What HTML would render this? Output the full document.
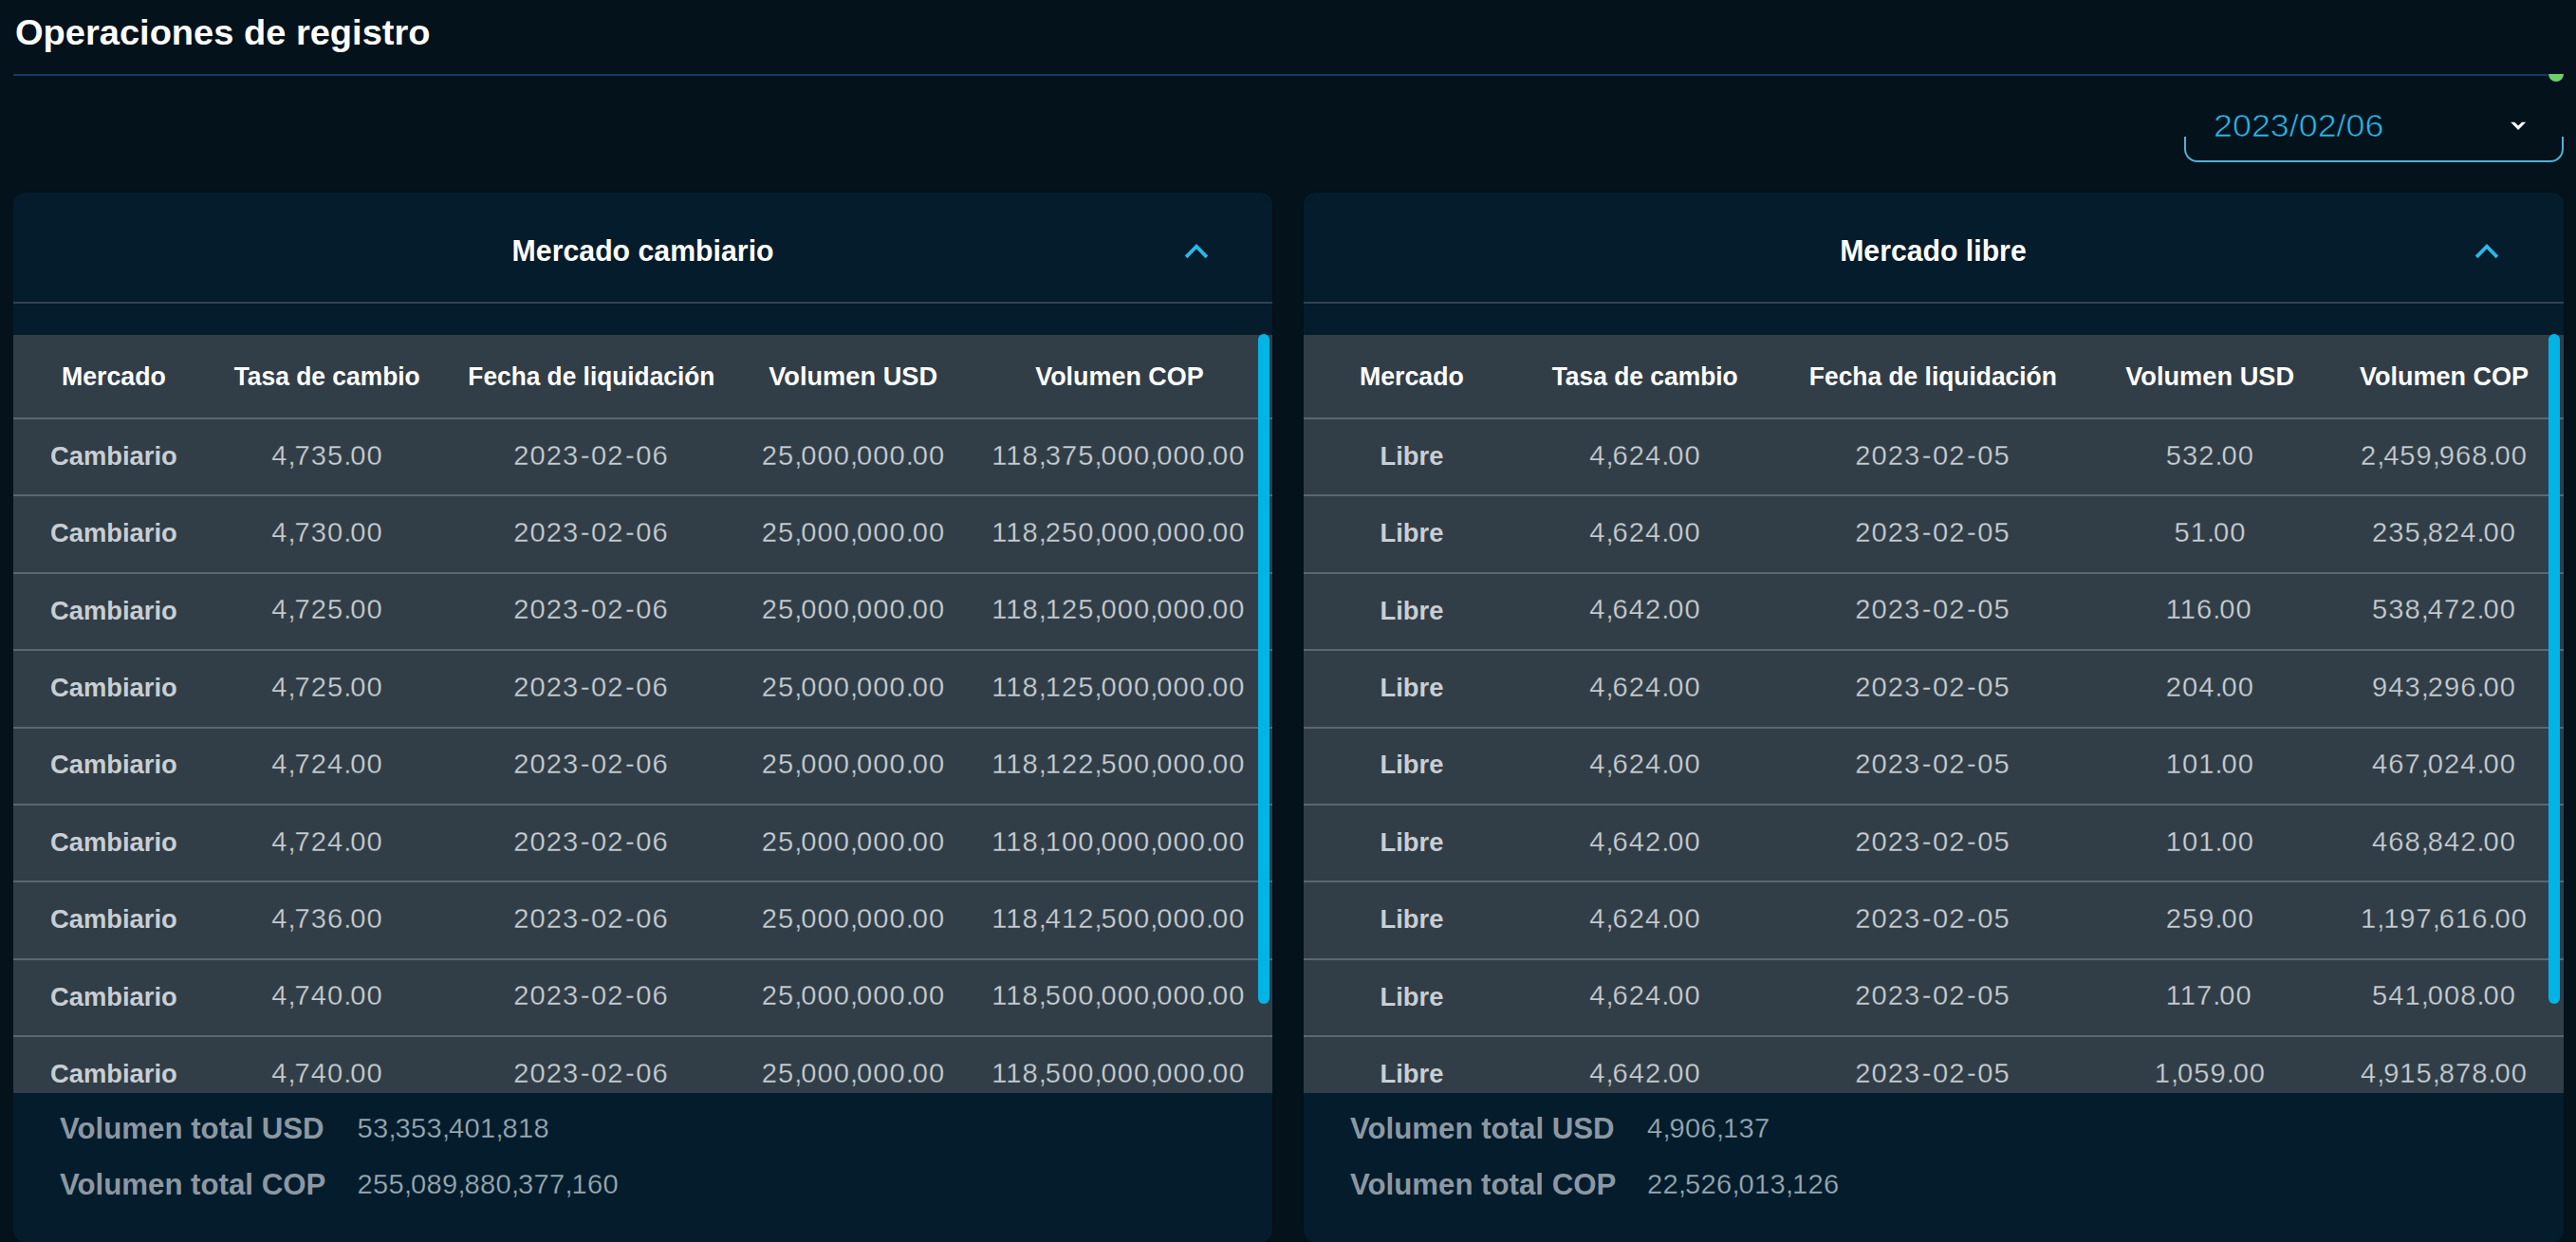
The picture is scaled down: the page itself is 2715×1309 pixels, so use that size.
<!DOCTYPE html>
<html lang="es"><head><meta charset="utf-8"><title>Operaciones de registro</title>
<style>
html,body{margin:0;padding:0;}
body{width:2715px;height:1309px;overflow:hidden;position:relative;background:#03121b;font-family:"Liberation Sans",sans-serif;}
.a{position:absolute;white-space:nowrap;}
.b{font-weight:bold;}
.n,.f{font-size:29.07px;line-height:29.07px;}
.n{color:#c8ced4;letter-spacing:1.08px;-webkit-text-stroke:0.3px #323e47;}
.f{color:#9aabb6;letter-spacing:0.33px;-webkit-text-stroke:0.3px #051c2c;}
.n i,.f i{font-style:normal;letter-spacing:-1.08px;}
.n u{text-decoration:none;letter-spacing:1.53px;margin-left:1.53px;}
</style></head><body>
<div class="a b" style="top:15.77px;font-size:37.48px;line-height:37.48px;color:#ffffff;left:16.00px;transform:scaleX(1.0150);transform-origin:left;">Operaciones de registro</div>
<div class="a" style="left:14.00px;top:78.00px;width:2671.00px;height:2.00px;background:#133a66;"></div>
<div class="a" style="left:2686.00px;top:78.00px;width:16.00px;height:8.00px;background:#6dcf6b;border-radius:0 0 8px 8px;"></div>
<div class="a" style="left:2302px;top:144px;width:396px;height:25px;border:2px solid #52b0d9;border-top:none;border-radius:0 0 14px 14px;"></div>
<div class="a" style="-webkit-text-stroke:0.7px #03121b;top:115.70px;font-size:33.43px;line-height:33.43px;color:#2bb6e6;left:2333.00px;transform:scaleX(1.0728);transform-origin:left;">2023/02/06</div>
<svg class="a" style="left:2644px;top:126px" width="20" height="14" viewBox="0 0 20 14"><path d="M2.1 2.7 L6.3 2.7 L10.1 6.4 L14 2.7 L18.2 2.7 L10.1 11 Z" fill="#fff"/></svg>
<!-- card: Mercado cambiario -->
<div class="a" style="left:14.00px;top:203.00px;width:1327.20px;height:1107.00px;background:#051c2c;border-radius:12px 12px 14px 14px;"></div>
<div class="a b" style="top:248.93px;font-size:31.51px;line-height:31.51px;color:#ffffff;left:534.01px;width:287.19px;text-align:center;transform:scaleX(0.9611);transform-origin:center;">Mercado cambiario</div>
<svg class="a" style="left:1246px;top:250px" width="30" height="28" viewBox="0 0 30 28"><path d="M4.1 20.9 L15 9.7 L25.9 20.9" fill="none" stroke="#2bb8e8" stroke-width="3.8"/></svg>
<div class="a" style="left:14.00px;top:318.00px;width:1327.20px;height:2.00px;background:#32424e;"></div>
<div class="a" style="left:14.00px;top:353.00px;width:1327.20px;height:799.00px;background:#323e47;"></div>
<div class="a b" style="top:382.45px;font-size:28.18px;line-height:28.18px;color:#ffffff;left:62.06px;width:115.88px;text-align:center;transform:scaleX(0.9493);transform-origin:center;">Mercado</div>
<div class="a b" style="top:382.45px;font-size:28.18px;line-height:28.18px;color:#ffffff;left:239.29px;width:211.42px;text-align:center;transform:scaleX(0.9365);transform-origin:center;">Tasa de cambio</div>
<div class="a b" style="top:382.45px;font-size:28.18px;line-height:28.18px;color:#ffffff;left:483.65px;width:278.70px;text-align:center;transform:scaleX(0.9329);transform-origin:center;">Fecha de liquidación</div>
<div class="a b" style="top:382.45px;font-size:28.18px;line-height:28.18px;color:#ffffff;left:806.35px;width:186.31px;text-align:center;transform:scaleX(0.9661);transform-origin:center;">Volumen USD</div>
<div class="a b" style="top:382.45px;font-size:28.18px;line-height:28.18px;color:#ffffff;left:1086.06px;width:187.88px;text-align:center;transform:scaleX(0.9554);transform-origin:center;">Volumen COP</div>
<div class="a" style="left:14.00px;top:440.00px;width:1327.20px;height:2.00px;background:#5b6770;"></div>
<div class="a b" style="top:466.70px;font-size:27.76px;line-height:27.76px;color:#c8ced4;left:52.12px;width:135.76px;text-align:center;transform:scaleX(0.9864);transform-origin:center;">Cambiario</div>
<div class="a n" style="top:465.59px;left:286.25px">4<i>,</i>735<i>.</i>00</div>
<div class="a n" style="top:465.59px;left:541.25px">2023<u>-</u>02<u>-</u>06</div>
<div class="a n" style="top:465.59px;left:802.75px">25<i>,</i>000<i>,</i>000<i>.</i>00</div>
<div class="a n" style="top:465.59px;left:1045.25px">118<i>,</i>375<i>,</i>000<i>,</i>000<i>.</i>00</div>
<div class="a" style="left:14.00px;top:521.00px;width:1327.20px;height:2.00px;background:#5b6770;"></div>
<div class="a b" style="top:548.10px;font-size:27.76px;line-height:27.76px;color:#c8ced4;left:52.12px;width:135.76px;text-align:center;transform:scaleX(0.9864);transform-origin:center;">Cambiario</div>
<div class="a n" style="top:546.99px;left:286.25px">4<i>,</i>730<i>.</i>00</div>
<div class="a n" style="top:546.99px;left:541.25px">2023<u>-</u>02<u>-</u>06</div>
<div class="a n" style="top:546.99px;left:802.75px">25<i>,</i>000<i>,</i>000<i>.</i>00</div>
<div class="a n" style="top:546.99px;left:1045.25px">118<i>,</i>250<i>,</i>000<i>,</i>000<i>.</i>00</div>
<div class="a" style="left:14.00px;top:603.00px;width:1327.20px;height:2.00px;background:#5b6770;"></div>
<div class="a b" style="top:629.50px;font-size:27.76px;line-height:27.76px;color:#c8ced4;left:52.12px;width:135.76px;text-align:center;transform:scaleX(0.9864);transform-origin:center;">Cambiario</div>
<div class="a n" style="top:628.39px;left:286.25px">4<i>,</i>725<i>.</i>00</div>
<div class="a n" style="top:628.39px;left:541.25px">2023<u>-</u>02<u>-</u>06</div>
<div class="a n" style="top:628.39px;left:802.75px">25<i>,</i>000<i>,</i>000<i>.</i>00</div>
<div class="a n" style="top:628.39px;left:1045.25px">118<i>,</i>125<i>,</i>000<i>,</i>000<i>.</i>00</div>
<div class="a" style="left:14.00px;top:684.00px;width:1327.20px;height:2.00px;background:#5b6770;"></div>
<div class="a b" style="top:710.90px;font-size:27.76px;line-height:27.76px;color:#c8ced4;left:52.12px;width:135.76px;text-align:center;transform:scaleX(0.9864);transform-origin:center;">Cambiario</div>
<div class="a n" style="top:709.79px;left:286.25px">4<i>,</i>725<i>.</i>00</div>
<div class="a n" style="top:709.79px;left:541.25px">2023<u>-</u>02<u>-</u>06</div>
<div class="a n" style="top:709.79px;left:802.75px">25<i>,</i>000<i>,</i>000<i>.</i>00</div>
<div class="a n" style="top:709.79px;left:1045.25px">118<i>,</i>125<i>,</i>000<i>,</i>000<i>.</i>00</div>
<div class="a" style="left:14.00px;top:766.00px;width:1327.20px;height:2.00px;background:#5b6770;"></div>
<div class="a b" style="top:792.30px;font-size:27.76px;line-height:27.76px;color:#c8ced4;left:52.12px;width:135.76px;text-align:center;transform:scaleX(0.9864);transform-origin:center;">Cambiario</div>
<div class="a n" style="top:791.19px;left:286.25px">4<i>,</i>724<i>.</i>00</div>
<div class="a n" style="top:791.19px;left:541.25px">2023<u>-</u>02<u>-</u>06</div>
<div class="a n" style="top:791.19px;left:802.75px">25<i>,</i>000<i>,</i>000<i>.</i>00</div>
<div class="a n" style="top:791.19px;left:1045.25px">118<i>,</i>122<i>,</i>500<i>,</i>000<i>.</i>00</div>
<div class="a" style="left:14.00px;top:847.00px;width:1327.20px;height:2.00px;background:#5b6770;"></div>
<div class="a b" style="top:873.70px;font-size:27.76px;line-height:27.76px;color:#c8ced4;left:52.12px;width:135.76px;text-align:center;transform:scaleX(0.9864);transform-origin:center;">Cambiario</div>
<div class="a n" style="top:872.59px;left:286.25px">4<i>,</i>724<i>.</i>00</div>
<div class="a n" style="top:872.59px;left:541.25px">2023<u>-</u>02<u>-</u>06</div>
<div class="a n" style="top:872.59px;left:802.75px">25<i>,</i>000<i>,</i>000<i>.</i>00</div>
<div class="a n" style="top:872.59px;left:1045.25px">118<i>,</i>100<i>,</i>000<i>,</i>000<i>.</i>00</div>
<div class="a" style="left:14.00px;top:928.00px;width:1327.20px;height:2.00px;background:#5b6770;"></div>
<div class="a b" style="top:955.10px;font-size:27.76px;line-height:27.76px;color:#c8ced4;left:52.12px;width:135.76px;text-align:center;transform:scaleX(0.9864);transform-origin:center;">Cambiario</div>
<div class="a n" style="top:953.99px;left:286.25px">4<i>,</i>736<i>.</i>00</div>
<div class="a n" style="top:953.99px;left:541.25px">2023<u>-</u>02<u>-</u>06</div>
<div class="a n" style="top:953.99px;left:802.75px">25<i>,</i>000<i>,</i>000<i>.</i>00</div>
<div class="a n" style="top:953.99px;left:1045.25px">118<i>,</i>412<i>,</i>500<i>,</i>000<i>.</i>00</div>
<div class="a" style="left:14.00px;top:1010.00px;width:1327.20px;height:2.00px;background:#5b6770;"></div>
<div class="a b" style="top:1036.50px;font-size:27.76px;line-height:27.76px;color:#c8ced4;left:52.12px;width:135.76px;text-align:center;transform:scaleX(0.9864);transform-origin:center;">Cambiario</div>
<div class="a n" style="top:1035.39px;left:286.25px">4<i>,</i>740<i>.</i>00</div>
<div class="a n" style="top:1035.39px;left:541.25px">2023<u>-</u>02<u>-</u>06</div>
<div class="a n" style="top:1035.39px;left:802.75px">25<i>,</i>000<i>,</i>000<i>.</i>00</div>
<div class="a n" style="top:1035.39px;left:1045.25px">118<i>,</i>500<i>,</i>000<i>,</i>000<i>.</i>00</div>
<div class="a" style="left:14.00px;top:1091.00px;width:1327.20px;height:2.00px;background:#5b6770;"></div>
<div class="a b" style="top:1117.90px;font-size:27.76px;line-height:27.76px;color:#c8ced4;left:52.12px;width:135.76px;text-align:center;transform:scaleX(0.9864);transform-origin:center;">Cambiario</div>
<div class="a n" style="top:1116.79px;left:286.25px">4<i>,</i>740<i>.</i>00</div>
<div class="a n" style="top:1116.79px;left:541.25px">2023<u>-</u>02<u>-</u>06</div>
<div class="a n" style="top:1116.79px;left:802.75px">25<i>,</i>000<i>,</i>000<i>.</i>00</div>
<div class="a n" style="top:1116.79px;left:1045.25px">118<i>,</i>500<i>,</i>000<i>,</i>000<i>.</i>00</div>
<div class="a" style="left:1325.70px;top:352.00px;width:12.00px;height:706.00px;background:#00b4e6;border-radius:6px;"></div>
<div class="a b" style="top:1173.75px;font-size:30.54px;line-height:30.54px;color:#8b98a3;left:63.00px;transform:scaleX(1.0224);transform-origin:left;">Volumen total USD</div>
<div class="a b" style="top:1232.95px;font-size:30.54px;line-height:30.54px;color:#8b98a3;left:63.00px;transform:scaleX(1.0220);transform-origin:left;">Volumen total COP</div>
<div class="a f" style="top:1174.99px;left:376.50px">53<i>,</i>353<i>,</i>401<i>,</i>818</div>
<div class="a f" style="top:1234.19px;left:376.50px">255<i>,</i>089<i>,</i>880<i>,</i>377<i>,</i>160</div>
<!-- card: Mercado libre -->
<div class="a" style="left:1373.50px;top:203.00px;width:1328.20px;height:1107.00px;background:#051c2c;border-radius:12px 12px 14px 14px;"></div>
<div class="a b" style="top:248.93px;font-size:31.51px;line-height:31.51px;color:#ffffff;left:1935.16px;width:204.87px;text-align:center;transform:scaleX(0.9596);transform-origin:center;">Mercado libre</div>
<svg class="a" style="left:2606px;top:250px" width="30" height="28" viewBox="0 0 30 28"><path d="M4.1 20.9 L15 9.7 L25.9 20.9" fill="none" stroke="#2bb8e8" stroke-width="3.8"/></svg>
<div class="a" style="left:1373.50px;top:318.00px;width:1328.20px;height:2.00px;background:#32424e;"></div>
<div class="a" style="left:1373.50px;top:353.00px;width:1328.20px;height:799.00px;background:#323e47;"></div>
<div class="a b" style="top:382.45px;font-size:28.18px;line-height:28.18px;color:#ffffff;left:1430.06px;width:115.88px;text-align:center;transform:scaleX(0.9493);transform-origin:center;">Mercado</div>
<div class="a b" style="top:382.45px;font-size:28.18px;line-height:28.18px;color:#ffffff;left:1628.29px;width:211.42px;text-align:center;transform:scaleX(0.9365);transform-origin:center;">Tasa de cambio</div>
<div class="a b" style="top:382.45px;font-size:28.18px;line-height:28.18px;color:#ffffff;left:1897.65px;width:278.70px;text-align:center;transform:scaleX(0.9365);transform-origin:center;">Fecha de liquidación</div>
<div class="a b" style="top:382.45px;font-size:28.18px;line-height:28.18px;color:#ffffff;left:2236.25px;width:186.31px;text-align:center;transform:scaleX(0.9661);transform-origin:center;">Volumen USD</div>
<div class="a b" style="top:382.45px;font-size:28.18px;line-height:28.18px;color:#ffffff;left:2482.06px;width:187.88px;text-align:center;transform:scaleX(0.9581);transform-origin:center;">Volumen COP</div>
<div class="a" style="left:1373.50px;top:440.00px;width:1328.20px;height:2.00px;background:#5b6770;"></div>
<div class="a b" style="top:466.70px;font-size:27.76px;line-height:27.76px;color:#c8ced4;left:1454.06px;width:67.87px;text-align:center;transform:scaleX(0.9864);transform-origin:center;">Libre</div>
<div class="a n" style="top:465.59px;left:1675.25px">4<i>,</i>624<i>.</i>00</div>
<div class="a n" style="top:465.59px;left:1955.25px">2023<u>-</u>02<u>-</u>05</div>
<div class="a n" style="top:465.59px;left:2282.78px">532<i>.</i>00</div>
<div class="a n" style="top:465.59px;left:2487.88px">2<i>,</i>459<i>,</i>968<i>.</i>00</div>
<div class="a" style="left:1373.50px;top:521.00px;width:1328.20px;height:2.00px;background:#5b6770;"></div>
<div class="a b" style="top:548.10px;font-size:27.76px;line-height:27.76px;color:#c8ced4;left:1454.06px;width:67.87px;text-align:center;transform:scaleX(0.9864);transform-origin:center;">Libre</div>
<div class="a n" style="top:546.99px;left:1675.25px">4<i>,</i>624<i>.</i>00</div>
<div class="a n" style="top:546.99px;left:1955.25px">2023<u>-</u>02<u>-</u>05</div>
<div class="a n" style="top:546.99px;left:2291.40px">51<i>.</i>00</div>
<div class="a n" style="top:546.99px;left:2500.00px">235<i>,</i>824<i>.</i>00</div>
<div class="a" style="left:1373.50px;top:603.00px;width:1328.20px;height:2.00px;background:#5b6770;"></div>
<div class="a b" style="top:629.50px;font-size:27.76px;line-height:27.76px;color:#c8ced4;left:1454.06px;width:67.87px;text-align:center;transform:scaleX(0.9864);transform-origin:center;">Libre</div>
<div class="a n" style="top:628.39px;left:1675.25px">4<i>,</i>642<i>.</i>00</div>
<div class="a n" style="top:628.39px;left:1955.25px">2023<u>-</u>02<u>-</u>05</div>
<div class="a n" style="top:628.39px;left:2282.78px">116<i>.</i>00</div>
<div class="a n" style="top:628.39px;left:2500.00px">538<i>,</i>472<i>.</i>00</div>
<div class="a" style="left:1373.50px;top:684.00px;width:1328.20px;height:2.00px;background:#5b6770;"></div>
<div class="a b" style="top:710.90px;font-size:27.76px;line-height:27.76px;color:#c8ced4;left:1454.06px;width:67.87px;text-align:center;transform:scaleX(0.9864);transform-origin:center;">Libre</div>
<div class="a n" style="top:709.79px;left:1675.25px">4<i>,</i>624<i>.</i>00</div>
<div class="a n" style="top:709.79px;left:1955.25px">2023<u>-</u>02<u>-</u>05</div>
<div class="a n" style="top:709.79px;left:2282.78px">204<i>.</i>00</div>
<div class="a n" style="top:709.79px;left:2500.00px">943<i>,</i>296<i>.</i>00</div>
<div class="a" style="left:1373.50px;top:766.00px;width:1328.20px;height:2.00px;background:#5b6770;"></div>
<div class="a b" style="top:792.30px;font-size:27.76px;line-height:27.76px;color:#c8ced4;left:1454.06px;width:67.87px;text-align:center;transform:scaleX(0.9864);transform-origin:center;">Libre</div>
<div class="a n" style="top:791.19px;left:1675.25px">4<i>,</i>624<i>.</i>00</div>
<div class="a n" style="top:791.19px;left:1955.25px">2023<u>-</u>02<u>-</u>05</div>
<div class="a n" style="top:791.19px;left:2282.78px">101<i>.</i>00</div>
<div class="a n" style="top:791.19px;left:2500.00px">467<i>,</i>024<i>.</i>00</div>
<div class="a" style="left:1373.50px;top:847.00px;width:1328.20px;height:2.00px;background:#5b6770;"></div>
<div class="a b" style="top:873.70px;font-size:27.76px;line-height:27.76px;color:#c8ced4;left:1454.06px;width:67.87px;text-align:center;transform:scaleX(0.9864);transform-origin:center;">Libre</div>
<div class="a n" style="top:872.59px;left:1675.25px">4<i>,</i>642<i>.</i>00</div>
<div class="a n" style="top:872.59px;left:1955.25px">2023<u>-</u>02<u>-</u>05</div>
<div class="a n" style="top:872.59px;left:2282.78px">101<i>.</i>00</div>
<div class="a n" style="top:872.59px;left:2500.00px">468<i>,</i>842<i>.</i>00</div>
<div class="a" style="left:1373.50px;top:928.00px;width:1328.20px;height:2.00px;background:#5b6770;"></div>
<div class="a b" style="top:955.10px;font-size:27.76px;line-height:27.76px;color:#c8ced4;left:1454.06px;width:67.87px;text-align:center;transform:scaleX(0.9864);transform-origin:center;">Libre</div>
<div class="a n" style="top:953.99px;left:1675.25px">4<i>,</i>624<i>.</i>00</div>
<div class="a n" style="top:953.99px;left:1955.25px">2023<u>-</u>02<u>-</u>05</div>
<div class="a n" style="top:953.99px;left:2282.78px">259<i>.</i>00</div>
<div class="a n" style="top:953.99px;left:2487.88px">1<i>,</i>197<i>,</i>616<i>.</i>00</div>
<div class="a" style="left:1373.50px;top:1010.00px;width:1328.20px;height:2.00px;background:#5b6770;"></div>
<div class="a b" style="top:1036.50px;font-size:27.76px;line-height:27.76px;color:#c8ced4;left:1454.06px;width:67.87px;text-align:center;transform:scaleX(0.9864);transform-origin:center;">Libre</div>
<div class="a n" style="top:1035.39px;left:1675.25px">4<i>,</i>624<i>.</i>00</div>
<div class="a n" style="top:1035.39px;left:1955.25px">2023<u>-</u>02<u>-</u>05</div>
<div class="a n" style="top:1035.39px;left:2282.78px">117<i>.</i>00</div>
<div class="a n" style="top:1035.39px;left:2500.00px">541<i>,</i>008<i>.</i>00</div>
<div class="a" style="left:1373.50px;top:1091.00px;width:1328.20px;height:2.00px;background:#5b6770;"></div>
<div class="a b" style="top:1117.90px;font-size:27.76px;line-height:27.76px;color:#c8ced4;left:1454.06px;width:67.87px;text-align:center;transform:scaleX(0.9864);transform-origin:center;">Libre</div>
<div class="a n" style="top:1116.79px;left:1675.25px">4<i>,</i>642<i>.</i>00</div>
<div class="a n" style="top:1116.79px;left:1955.25px">2023<u>-</u>02<u>-</u>05</div>
<div class="a n" style="top:1116.79px;left:2270.65px">1<i>,</i>059<i>.</i>00</div>
<div class="a n" style="top:1116.79px;left:2487.88px">4<i>,</i>915<i>,</i>878<i>.</i>00</div>
<div class="a" style="left:2686.20px;top:352.00px;width:12.00px;height:706.00px;background:#00b4e6;border-radius:6px;"></div>
<div class="a b" style="top:1173.75px;font-size:30.54px;line-height:30.54px;color:#8b98a3;left:1422.50px;transform:scaleX(1.0224);transform-origin:left;">Volumen total USD</div>
<div class="a b" style="top:1232.95px;font-size:30.54px;line-height:30.54px;color:#8b98a3;left:1422.50px;transform:scaleX(1.0220);transform-origin:left;">Volumen total COP</div>
<div class="a f" style="top:1174.99px;left:1736.00px">4<i>,</i>906<i>,</i>137</div>
<div class="a f" style="top:1234.19px;left:1736.00px">22<i>,</i>526<i>,</i>013<i>,</i>126</div>
</body></html>
